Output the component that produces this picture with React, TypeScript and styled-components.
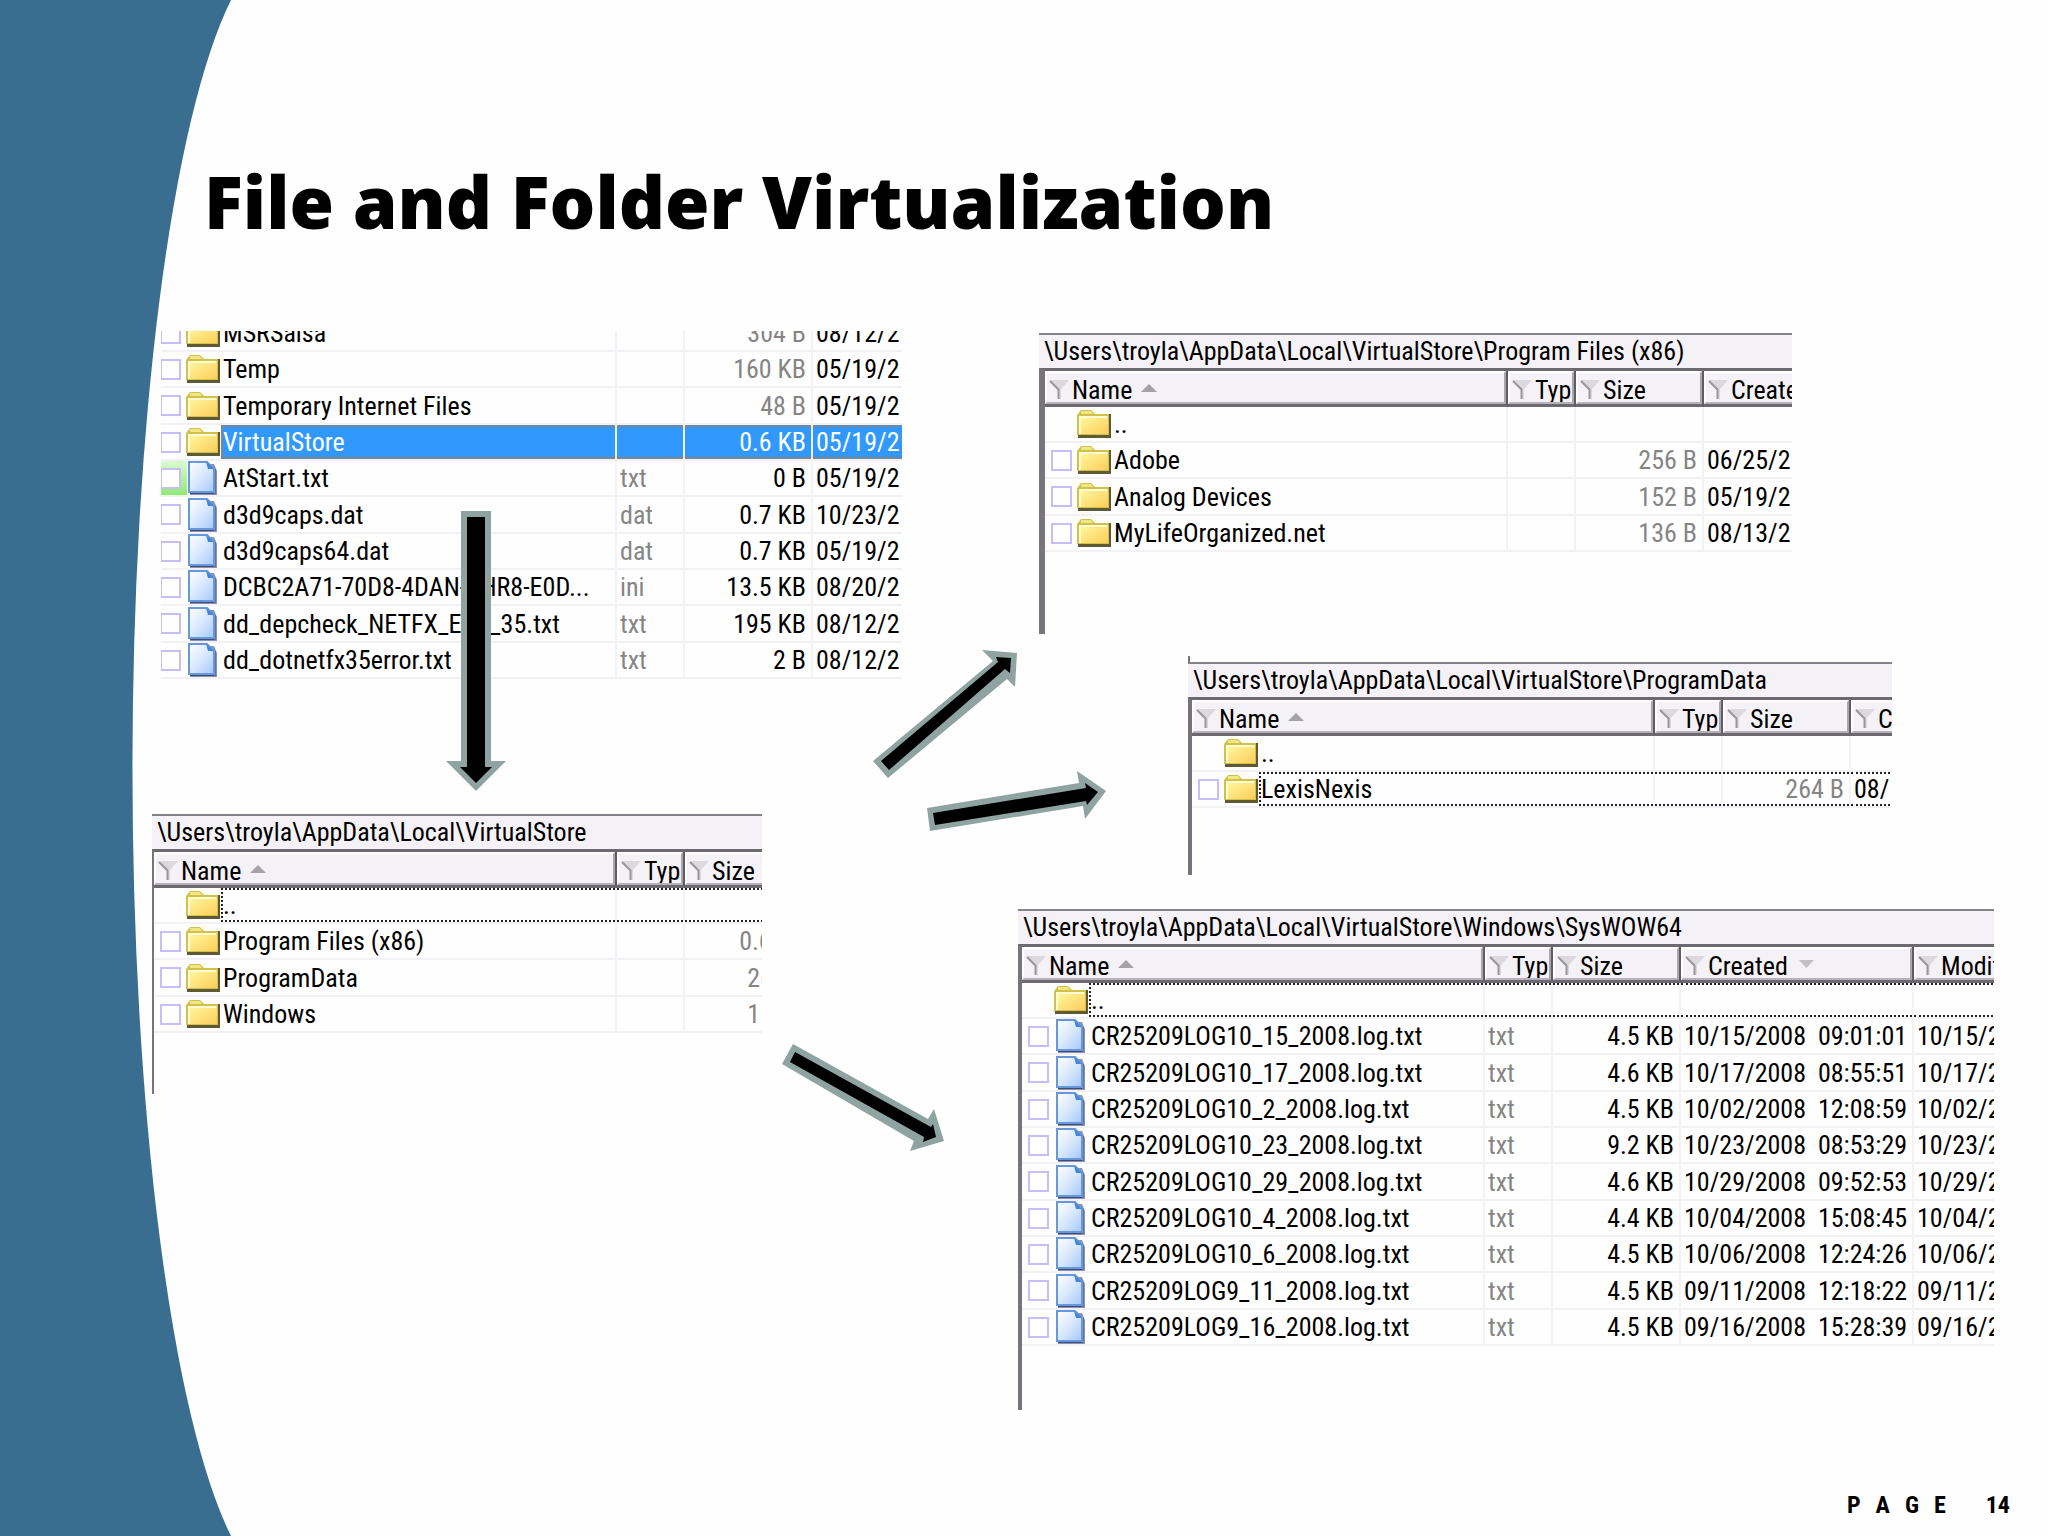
import React from "react";
import styled, { createGlobalStyle, css } from "styled-components";

const uiFont = '"Roboto Condensed", "Liberation Sans Narrow", Roboto, "Liberation Sans", sans-serif';

const GlobalStyle = createGlobalStyle`
  *, *::before, *::after { box-sizing: border-box; }
  body { margin: 0; background: #fefefe; color: #000; font-family: ${uiFont}; }
`;

/* ---------- slide ---------- */

const Slide = styled.main`
  position: relative;
  display: flex;
  flex-direction: column;
  min-height: 100vh;
  overflow: hidden;
`;

const Sweep = styled.svg`
  position: absolute;
  left: 0;
  top: 0;
  width: 232px;
  height: 100%;
`;

const ArrowLayer = styled.svg`
  position: absolute;
  left: 0;
  top: 0;
  width: 100%;
  height: 100%;
  pointer-events: none;
`;

const Title = styled.h1`
  position: relative;
  margin: 0;
  padding: 159px 60px 0 204px;
  font-family: "Open Sans", Inter, "Liberation Sans", sans-serif;
  font-weight: 800;
  font-size: 72px;
  line-height: 84px;
`;

const Board = styled.div`
  position: relative;
  display: grid;
  grid-template-columns: 375fr 488fr;
  column-gap: 116px;
  padding: 88px 54px 0 152px;
`;

const Column = styled.div<{ $top?: number }>`
  display: flex;
  flex-direction: column;
  min-width: 0;
  padding-top: ${(p) => p.$top ?? 0}px;
`;

const Footer = styled.footer`
  position: relative;
  display: flex;
  justify-content: flex-end;
  gap: 40px;
  margin-top: auto;
  padding: 0 38px 17px 0;
  font-size: 24px;
  line-height: 28px;
  font-weight: 700;
`;

const Spaced = styled.span`
  display: flex;
  gap: 15px;
`;

/* ---------- file panel ---------- */

const Panel = styled.section<{ $left?: number; $right?: number; $gap?: number; $height: number }>`
  margin: 0 ${(p) => p.$right ?? 0}px ${(p) => p.$gap ?? 0}px ${(p) => p.$left ?? 0}px;
  min-height: ${(p) => p.$height}px;
  display: flex;
  flex-direction: column;
  overflow: hidden;
`;

const Stub = styled.div`
  height: 6px;
  border-left: 2px solid #77757b;
`;

const PathBar = styled.div`
  flex: none;
  height: 35px;
  border-top: 2px solid #858389;
  background: #f5f2f7;
  padding-left: 5px;
  font-size: 26px;
  line-height: 33px;
  white-space: pre;
`;

const ListFrame = styled.div<{ $edge: number }>`
  flex: 1;
  border-top: 3px solid #6c6a70;
  border-left: ${(p) => p.$edge}px solid #77757b;
  overflow: hidden;
`;

const ScrolledList = styled.div`
  margin: -15px 0 0 -7px;
`;

const Table = styled.table<{ $width: number }>`
  table-layout: fixed;
  width: ${(p) => p.$width}px;
  border-collapse: separate;
  border-spacing: 0;
  font-size: 26px;
  line-height: 32px;
`;

const HeadCell = styled.th`
  height: 36px;
  padding: 0;
  border-bottom: 3px solid #6c6a70;
  border-right: 2px solid #5f5d63;
  font-weight: 400;
  overflow: hidden;
`;

const HeadButton = styled.button`
  display: flex;
  align-items: center;
  width: 100%;
  height: 33px;
  padding: 4px 0 0 2px;
  border: 2px solid;
  border-color: #fff #a9a6ad #b5b2b9 #fff;
  border-radius: 0;
  background: #f5f2f7;
  color: #000;
  font: inherit;
  line-height: 24px;
  white-space: nowrap;
  overflow: hidden;
`;

const HeadText = styled.span`
  margin-left: 2px;
`;

const Row = styled.tr`
  height: 36px;
  &:nth-child(3n) {
    height: 37px;
  }
`;

const Cell = styled.td`
  height: inherit;
  padding: 0;
  border-right: 2px solid #f5f2f7;
  border-bottom: 2px solid #f3f1f6;
  overflow: hidden;
  white-space: pre;
`;

type Mark = "focus" | "selected" | undefined;

const CellBox = styled.div<{ $mark?: Mark; $align?: "right"; $tone?: "muted"; $lead?: boolean }>`
  flex: 1;
  min-width: 0;
  height: 34px;
  padding: 0 5px 0 ${(p) => (p.$lead ? 0 : 3)}px;
  border: 0 dotted transparent;
  border-width: 2px 0 2px ${(p) => (p.$lead ? 2 : 0)}px;
  line-height: 31px;
  text-align: ${(p) => p.$align ?? "left"};
  color: ${(p) => (p.$tone ? "#858585" : "#000")};
  overflow: hidden;
  text-overflow: clip;
  ${(p) => p.$mark === "focus" && css`border-color: #222;`}
  ${(p) =>
    p.$mark === "selected" &&
    css`
      border-color: #b9773f;
      background: #3199fe;
      color: #fff;
    `}
`;

const NameBox = styled.label<{ $flag?: boolean }>`
  display: flex;
  align-items: center;
  height: 34px;
  padding-left: 6px;
  background: ${(p) => (p.$flag ? "linear-gradient(to bottom, #d9fbd0, #8eea72) 0 0 / 33px 100% no-repeat" : "none")};
`;

const Tick = styled.input`
  appearance: none;
  flex: none;
  width: 21px;
  height: 21px;
  margin: 0 5px 0 0;
  border: 2px solid #c9bdf8;
  background: #fff;
`;

const TickSpace = styled.span`
  flex: none;
  width: 26px;
`;

const Glyph = styled.svg`
  display: block;
  flex: none;
`;

/* ---------- drawings ---------- */

const Funnel = () => (
  <Glyph width="21" height="20" viewBox="0 0 21 20" aria-hidden="true">
    <path d="M1 0H20L12 9V19H9V9Z" fill="#dcd9de" />
    <path d="M1 1L9.500 9.500V19" fill="none" stroke="#98959b" strokeWidth="2" />
  </Glyph>
);

const SortMark = ({ down }: { down?: boolean }) => (
  <Glyph width="32" height="12" viewBox="0 0 32 12" aria-hidden="true">
    <path d={down ? "M11 0H26L18.500 8Z" : "M9 8H25L17 0Z"} fill={down ? "#c2bfc5" : "#a4a1a7"} />
  </Glyph>
);

const FolderIcon = () => (
  <Glyph width="35" height="30" viewBox="0 0 35 30" aria-hidden="true">
    <path d="M2 5H34V29H1V26Z" fill="#5d5a35" />
    <path d="M0 6L4 1H14L18 5H32V26H0Z" fill="#d0c14c" />
    <path d="M4 2H14L16 5H4Z" fill="#efe784" />
    <rect x="2" y="7" width="29" height="18" fill="url(#folderFill)" />
    <path d="M3 25V8H30" fill="none" stroke="#fffbd0" strokeWidth="2" />
  </Glyph>
);

const FileIcon = () => (
  <Glyph width="35" height="34" viewBox="0 0 35 34" aria-hidden="true">
    <path d="M4 3H28L31 10V34H4Z" fill="#8b93ad" />
    <path d="M4 31H28V33H4Z" fill="#3f4c75" />
    <path d="M28 8H30V33H28Z" fill="#66729a" />
    <path d="M3 1H21L28 8V31H3Z" fill="url(#fileFill)" stroke="#6797dc" strokeWidth="2" />
    <path d="M20 1L28 8H22Z" fill="#3f86dc" />
  </Glyph>
);

const GradientDefs = styled.svg`
  position: absolute;
`;

const Sheet = () => (
  <GradientDefs width="0" height="0" aria-hidden="true">
    <defs>
      <linearGradient id="folderFill" x1="0" y1="0" x2="1" y2="1">
        <stop offset="0" stopColor="#fffaa0" />
        <stop offset="1" stopColor="#fdcd5c" />
      </linearGradient>
      <linearGradient id="fileFill" x1="0" y1="0" x2="1" y2="1">
        <stop offset="0" stopColor="#ffffff" />
        <stop offset="0.500" stopColor="#d9e8fd" />
        <stop offset="1" stopColor="#a3c8fa" />
      </linearGradient>
    </defs>
  </GradientDefs>
);

const arrows = [
  {
    edge: "461,511 491,511 491,761 506,761 476,791 446,761 461,761",
    core: "467,517 485,517 485,767 492,767 476,783 460,767 467,767",
  },
  {
    edge: "873,761 888,778 1007,679 1015,687 1017,653 982,650 993,661",
    core: "881,761 889,770 1005,669 1010,673 1011,658 996,657 998,662",
  },
  {
    edge: "927,808 930,831 1083,806 1085,819 1106,791 1077,771 1079,783",
    core: "933,813 935,825 1086,801 1087,805 1098,792 1085,783 1086,788",
  },
  {
    edge: "793,1044 782,1064 914,1141 910,1151 944,1141 934,1109 928,1119",
    core: "795,1052 790,1062 924,1137 923,1142 936,1137 933,1124 931,1127",
  },
];

/* ---------- data ---------- */

type Entry = {
  name: string;
  kind: "folder" | "file";
  type?: string;
  size?: string;
  created?: string;
  modified?: string;
  up?: boolean;
  mark?: Mark;
  flag?: boolean;
  muted?: boolean;
};

const folder = (name: string, size: string, created = "", extra: Partial<Entry> = {}): Entry => ({
  name, kind: "folder", size, created, muted: true, ...extra,
});
const file = (name: string, type: string, size: string, created: string, extra: Partial<Entry> = {}): Entry => ({
  name, kind: "file", type, size, created, ...extra,
});
const parent = (mark?: Mark): Entry => ({ name: "..", kind: "folder", up: true, mark });

const localFiles: Entry[] = [
  folder("MSRSalsa", "304 B", "08/12/2"),
  folder("Temp", "160 KB", "05/19/2"),
  folder("Temporary Internet Files", "48 B", "05/19/2"),
  folder("VirtualStore", "0.6 KB", "05/19/2", { mark: "selected", muted: false }),
  file("AtStart.txt", "txt", "0 B", "05/19/2", { flag: true }),
  file("d3d9caps.dat", "dat", "0.7 KB", "10/23/2"),
  file("d3d9caps64.dat", "dat", "0.7 KB", "05/19/2"),
  file("DCBC2A71-70D8-4DAN-BHR8-E0D...", "ini", "13.5 KB", "08/20/2"),
  file("dd_depcheck_NETFX_EXP_35.txt", "txt", "195 KB", "08/12/2"),
  file("dd_dotnetfx35error.txt", "txt", "2 B", "08/12/2"),
];

const storeFiles: Entry[] = [
  parent("focus"),
  folder("Program Files (x86)", "0.6 KB"),
  folder("ProgramData", "264 B"),
  folder("Windows", "152 B"),
];

const programFiles: Entry[] = [
  parent(),
  folder("Adobe", "256 B", "06/25/2"),
  folder("Analog Devices", "152 B", "05/19/2"),
  folder("MyLifeOrganized.net", "136 B", "08/13/2"),
];

const programData: Entry[] = [parent(), folder("LexisNexis", "264 B", "08/", { mark: "focus" })];

const logs: Entry[] = [
  ["10_15", "4.5 KB", "10/15/2008", "09:01:01"],
  ["10_17", "4.6 KB", "10/17/2008", "08:55:51"],
  ["10_2", "4.5 KB", "10/02/2008", "12:08:59"],
  ["10_23", "9.2 KB", "10/23/2008", "08:53:29"],
  ["10_29", "4.6 KB", "10/29/2008", "09:52:53"],
  ["10_4", "4.4 KB", "10/04/2008", "15:08:45"],
  ["10_6", "4.5 KB", "10/06/2008", "12:24:26"],
  ["9_11", "4.5 KB", "09/11/2008", "12:18:22"],
  ["9_16", "4.5 KB", "09/16/2008", "15:28:39"],
].map(([day, size, date, time]) =>
  file(`CR25209LOG${day}_2008.log.txt`, "txt", size, `${date}  ${time}`, { modified: date }),
);

const columnWidths = [463, 68, 128, 233, 233];
const headings = ["Name", "Type", "Size", "Created", "Modified"];

/* ---------- components ---------- */

const FileTable = ({
  label, rows, columns, header = true, sorted,
}: { label: string; rows: Entry[]; columns: number; header?: boolean; sorted?: boolean }) => {
  const widths = columnWidths.slice(0, columns);
  return (
    <Table aria-label={label} $width={widths.reduce((a, b) => a + b, 0)}>
      <colgroup>
        {widths.map((w, i) => (
          <col key={i} width={w} />
        ))}
      </colgroup>
      {header && (
        <thead>
          <tr>
            {headings.slice(0, columns).map((h) => (
              <HeadCell key={h} scope="col">
                <HeadButton type="button">
                  <Funnel />
                  <HeadText>{h}</HeadText>
                  {h === "Name" && <SortMark />}
                  {h === "Created" && sorted && <SortMark down />}
                </HeadButton>
              </HeadCell>
            ))}
          </tr>
        </thead>
      )}
      <tbody>
        {rows.map((r) => (
          <Row key={r.name}>
            <Cell>
              <NameBox $flag={r.flag}>
                {r.up ? <TickSpace /> : <Tick type="checkbox" />}
                {r.kind === "folder" ? <FolderIcon /> : <FileIcon />}
                <CellBox $lead $mark={r.mark}>{r.name}</CellBox>
              </NameBox>
            </Cell>
            <Cell>
              <CellBox $mark={r.mark} $tone="muted">{r.type}</CellBox>
            </Cell>
            <Cell>
              <CellBox $mark={r.mark} $align="right" $tone={r.muted ? "muted" : undefined}>{r.size}</CellBox>
            </Cell>
            {columns > 3 && (
              <Cell>
                <CellBox $mark={r.mark}>{r.created}</CellBox>
              </Cell>
            )}
            {columns > 4 && (
              <Cell>
                <CellBox $mark={r.mark}>{r.modified}</CellBox>
              </Cell>
            )}
          </Row>
        ))}
      </tbody>
    </Table>
  );
};

export default function App() {
  return (
    <Slide>
      <GlobalStyle />
      <Sheet />
      <Sweep viewBox="0 0 232 1536" preserveAspectRatio="none" aria-hidden="true">
        <path d="M0 0H231A151 819 0 0 0 231 1536H0Z" fill="#3a6e90" />
      </Sweep>
      <Title>File and Folder Virtualization</Title>
      <Board>
        <Column>
          <Panel $left={9} $height={349} $gap={134}>
            <ScrolledList>
              <FileTable label="Local" rows={localFiles} columns={4} header={false} />
            </ScrolledList>
          </Panel>
          <Panel $right={140} $height={280}>
            <PathBar>{"\\Users\\troyla\\AppData\\Local\\VirtualStore"}</PathBar>
            <ListFrame $edge={2}>
              <FileTable label="VirtualStore" rows={storeFiles} columns={3} />
            </ListFrame>
          </Panel>
        </Column>
        <Column $top={2}>
          <Panel $left={21} $right={202} $height={301} $gap={22}>
            <PathBar>{"\\Users\\troyla\\AppData\\Local\\VirtualStore\\Program Files (x86)"}</PathBar>
            <ListFrame $edge={6}>
              <FileTable label="Program Files (x86)" rows={programFiles} columns={4} />
            </ListFrame>
          </Panel>
          <Panel $left={170} $right={102} $height={219} $gap={34}>
            <Stub />
            <PathBar>{"\\Users\\troyla\\AppData\\Local\\VirtualStore\\ProgramData"}</PathBar>
            <ListFrame $edge={4}>
              <FileTable label="ProgramData" rows={programData} columns={4} />
            </ListFrame>
          </Panel>
          <Panel $height={501}>
            <PathBar>{"\\Users\\troyla\\AppData\\Local\\VirtualStore\\Windows\\SysWOW64"}</PathBar>
            <ListFrame $edge={4}>
              <FileTable label="SysWOW64" rows={[parent("focus"), ...logs]} columns={5} sorted />
            </ListFrame>
          </Panel>
        </Column>
      </Board>
      <Footer>
        <Spaced>
          <span>P</span>
          <span>A</span>
          <span>G</span>
          <span>E</span>
        </Spaced>
        <span>14</span>
      </Footer>
      <ArrowLayer aria-hidden="true">
        {arrows.map((a) => (
          <g key={a.edge}>
            <polygon points={a.edge} fill="#8fa4a0" />
            <polygon points={a.core} fill="#000" />
          </g>
        ))}
      </ArrowLayer>
    </Slide>
  );
}
